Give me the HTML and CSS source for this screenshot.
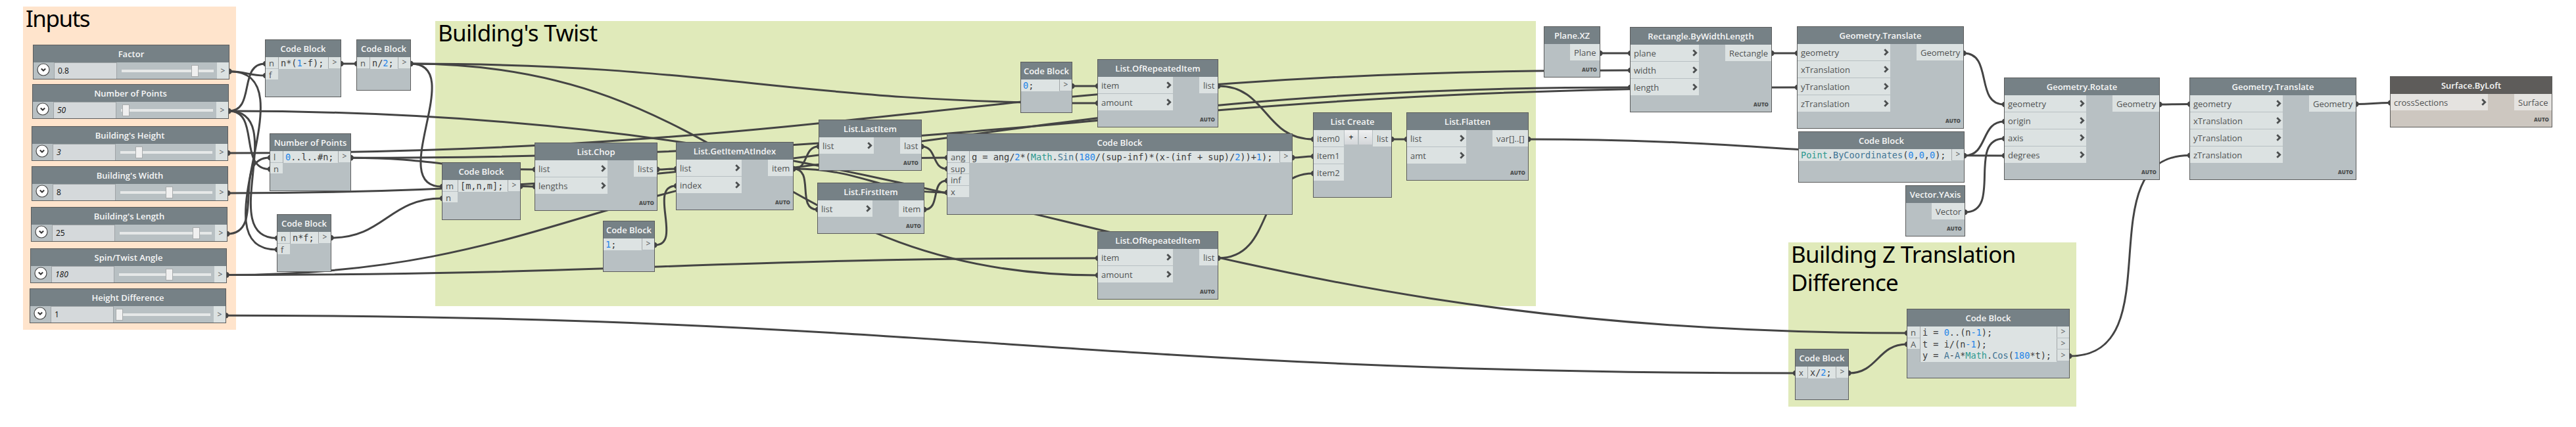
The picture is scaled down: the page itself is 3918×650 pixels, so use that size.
FILE: index.html
```html
<!DOCTYPE html>
<html lang="en">
<head>
<meta charset="utf-8">
<title>Graph workspace</title>
<link rel="stylesheet" href="styles.css">
</head>
<body>
<main class="canvas">
  <section class="group g-inputs"><h2>Inputs</h2></section>
  <section class="group green g-twist"><h2>Building's Twist</h2></section>
  <section class="group green g-diff"><h2>Building Z Translation Difference</h2></section>

  <svg class="wires" width="3918" height="650"></svg>

  <article class="node slider p-factor"><h3>Factor</h3><div class="body"><div class="toggle"><svg viewBox="0 0 20 20"><circle cx="10" cy="10" r="9"/><path d="M6.8 8.6 10 11.6 13.2 8.6"/></svg></div><div class="field">0.8</div><div class="range"><i></i></div><div class="out">&gt;</div></div></article>
  <article class="node slider p-points"><h3>Number of Points</h3><div class="body"><div class="toggle"><svg viewBox="0 0 20 20"><circle cx="10" cy="10" r="9"/><path d="M6.8 8.6 10 11.6 13.2 8.6"/></svg></div><div class="field"><em>50</em></div><div class="range"><i></i></div><div class="out">&gt;</div></div></article>
  <article class="node slider p-height"><h3>Building's Height</h3><div class="body"><div class="toggle"><svg viewBox="0 0 20 20"><circle cx="10" cy="10" r="9"/><path d="M6.8 8.6 10 11.6 13.2 8.6"/></svg></div><div class="field"><em>3</em></div><div class="range"><i></i></div><div class="out">&gt;</div></div></article>
  <article class="node slider p-width"><h3>Building's Width</h3><div class="body"><div class="toggle"><svg viewBox="0 0 20 20"><circle cx="10" cy="10" r="9"/><path d="M6.8 8.6 10 11.6 13.2 8.6"/></svg></div><div class="field">8</div><div class="range"><i></i></div><div class="out">&gt;</div></div></article>
  <article class="node slider p-length"><h3>Building's Length</h3><div class="body"><div class="toggle"><svg viewBox="0 0 20 20"><circle cx="10" cy="10" r="9"/><path d="M6.8 8.6 10 11.6 13.2 8.6"/></svg></div><div class="field">25</div><div class="range"><i></i></div><div class="out">&gt;</div></div></article>
  <article class="node slider p-spin"><h3>Spin/Twist Angle</h3><div class="body"><div class="toggle"><svg viewBox="0 0 20 20"><circle cx="10" cy="10" r="9"/><path d="M6.8 8.6 10 11.6 13.2 8.6"/></svg></div><div class="field"><em>180</em></div><div class="range"><i></i></div><div class="out">&gt;</div></div></article>
  <article class="node slider p-hdiff"><h3>Height Difference</h3><div class="body"><div class="toggle"><svg viewBox="0 0 20 20"><circle cx="10" cy="10" r="9"/><path d="M6.8 8.6 10 11.6 13.2 8.6"/></svg></div><div class="field">1</div><div class="range"><i></i></div><div class="out">&gt;</div></div></article>

  <article class="node code p-nf"><h3>Code Block</h3><div class="body"><ul class="ins"><li>n</li><li>f</li></ul><pre>n*(<b>1</b>-f);</pre><ul class="outs"><li>&gt;</li></ul></div></article>
  <article class="node code p-half"><h3>Code Block</h3><div class="body"><ul class="ins"><li>n</li></ul><pre>n/<b>2</b>;</pre><ul class="outs"><li>&gt;</li></ul></div></article>
  <article class="node code p-range"><h3>Number of Points</h3><div class="body"><ul class="ins"><li>l</li><li>n</li></ul><pre><b>0</b>..l..#n;</pre><ul class="outs"><li>&gt;</li></ul></div></article>
  <article class="node code p-mul"><h3>Code Block</h3><div class="body"><ul class="ins"><li>n</li><li>f</li></ul><pre>n*f;</pre><ul class="outs"><li>&gt;</li></ul></div></article>
  <article class="node code p-mnm"><h3>Code Block</h3><div class="body"><ul class="ins"><li>m</li><li>n</li></ul><pre>[m,n,m];</pre><ul class="outs"><li>&gt;</li></ul></div></article>

  <article class="node p-chop"><h3>List.Chop</h3><div class="body"><ul class="ins"><li>list</li><li>lengths</li></ul><ul class="outs"><li>lists</li></ul></div><footer>AUTO</footer></article>
  <article class="node p-getitem"><h3>List.GetItemAtIndex</h3><div class="body"><ul class="ins"><li>list</li><li>index</li></ul><ul class="outs"><li>item</li></ul></div><footer>AUTO</footer></article>
  <article class="node code p-one"><h3>Code Block</h3><div class="body"><pre><b>1</b>;</pre><ul class="outs"><li>&gt;</li></ul></div></article>
  <article class="node p-last"><h3>List.LastItem</h3><div class="body"><ul class="ins"><li>list</li></ul><ul class="outs"><li>last</li></ul></div><footer>AUTO</footer></article>
  <article class="node p-first"><h3>List.FirstItem</h3><div class="body"><ul class="ins"><li>list</li></ul><ul class="outs"><li>item</li></ul></div><footer>AUTO</footer></article>
  <article class="node code p-ang"><h3>Code Block</h3><div class="body"><ul class="ins"><li>ang</li><li>sup</li><li>inf</li><li>x</li></ul><pre>g = ang/<b>2</b>*(<u>Math</u>.<s>Sin</s>(<b>180</b>/(sup-inf)*(x-(inf + sup)/<b>2</b>))+<b>1</b>);</pre><ul class="outs"><li>&gt;</li></ul></div></article>
  <article class="node code p-zero"><h3>Code Block</h3><div class="body"><pre><b>0</b>;</pre><ul class="outs"><li>&gt;</li></ul></div></article>
  <article class="node p-rep1"><h3>List.OfRepeatedItem</h3><div class="body"><ul class="ins"><li>item</li><li>amount</li></ul><ul class="outs"><li>list</li></ul></div><footer>AUTO</footer></article>
  <article class="node p-rep2"><h3>List.OfRepeatedItem</h3><div class="body"><ul class="ins"><li>item</li><li>amount</li></ul><ul class="outs"><li>list</li></ul></div><footer>AUTO</footer></article>
  <article class="node p-create"><h3>List Create</h3><div class="body"><ul class="ins plain"><li>item0</li><li>item1</li><li>item2</li></ul><div class="buttons"><span>+</span><span>-</span></div><ul class="outs"><li>list</li></ul></div></article>
  <article class="node p-flatten"><h3>List.Flatten</h3><div class="body"><ul class="ins"><li>list</li><li>amt</li></ul><ul class="outs"><li>var[]..[]</li></ul></div><footer>AUTO</footer></article>

  <article class="node p-plane"><h3>Plane.XZ</h3><div class="body"><ul class="outs"><li>Plane</li></ul></div><footer>AUTO</footer></article>
  <article class="node p-rect"><h3>Rectangle.ByWidthLength</h3><div class="body"><ul class="ins"><li>plane</li><li>width</li><li>length</li></ul><ul class="outs"><li>Rectangle</li></ul></div><footer>AUTO</footer></article>
  <article class="node p-tr1"><h3>Geometry.Translate</h3><div class="body"><ul class="ins"><li>geometry</li><li>xTranslation</li><li>yTranslation</li><li>zTranslation</li></ul><ul class="outs"><li>Geometry</li></ul></div><footer>AUTO</footer></article>
  <article class="node code p-point"><h3>Code Block</h3><div class="body"><pre><u>Point</u>.<s>ByCoordinates</s>(<b>0</b>,<b>0</b>,<b>0</b>);</pre><ul class="outs"><li>&gt;</li></ul></div></article>
  <article class="node p-yaxis"><h3>Vector.YAxis</h3><div class="body"><ul class="outs"><li>Vector</li></ul></div><footer>AUTO</footer></article>
  <article class="node p-rotate"><h3>Geometry.Rotate</h3><div class="body"><ul class="ins"><li>geometry</li><li>origin</li><li>axis</li><li>degrees</li></ul><ul class="outs"><li>Geometry</li></ul></div><footer>AUTO</footer></article>
  <article class="node p-tr2"><h3>Geometry.Translate</h3><div class="body"><ul class="ins"><li>geometry</li><li>xTranslation</li><li>yTranslation</li><li>zTranslation</li></ul><ul class="outs"><li>Geometry</li></ul></div><footer>AUTO</footer></article>
  <article class="node warm p-loft"><h3>Surface.ByLoft</h3><div class="body"><ul class="ins"><li>crossSections</li></ul><ul class="outs"><li>Surface</li></ul></div><footer>AUTO</footer></article>
  <article class="node code p-x2"><h3>Code Block</h3><div class="body"><ul class="ins"><li>x</li></ul><pre>x/<b>2</b>;</pre><ul class="outs"><li>&gt;</li></ul></div></article>
  <article class="node code p-cos"><h3>Code Block</h3><div class="body"><ul class="ins"><li>n</li><li>A</li></ul><pre><span class="line">i = <b>0</b>..(n<b>-1</b>);</span><span class="line">t = i/(n<b>-1</b>);</span><span class="line">y = <s>A</s>-<s>A</s>*<u>Math</u>.<s>Cos</s>(<b>180</b>*t);</span></pre><ul class="outs"><li>&gt;</li><li>&gt;</li><li>&gt;</li></ul></div></article>
</main>
<script src="wires.js"></script>
</body>
</html>
```
FILE: styles.css
```css
* { box-sizing: border-box; }
body { margin: 0; background: #fff; font-family: "Open Sans", "Noto Sans", sans-serif; }
h2, h3, ul, pre { margin: 0; padding: 0; font-weight: 400; }
ul { list-style: none; }

.canvas { position: relative; width: 3918px; height: 650px; overflow: hidden; }

/* groups */
.group { position: absolute; display: flex; flex-direction: column; background: #ffe4cc; }
.group.green { background: #e0eaba; }
.group h2 { margin-top: -4px; padding-left: 4px; font-family: "Noto Sans", "Open Sans", sans-serif; font-size: 35px; line-height: 43px; letter-spacing: -0.7px; color: #000; }
.g-inputs { left: 35px; top: 10px; width: 324px; height: 492px; }
.g-inputs h2 { letter-spacing: -1.5px; }
.g-twist { left: 662px; top: 32px; width: 1674px; height: 434px; }
.g-diff { left: 2720px; top: 369px; width: 438px; height: 250px; }

/* connectors */
.wires { position: absolute; left: 0; top: 0; }
.wires path { fill: none; stroke: #444; stroke-width: 3; }
.wires circle { fill: #444; }

/* nodes */
.node { position: absolute; display: flex; flex-direction: column; border: 1px solid #5b5c5c; background: #b8c0c3; color: #505253; }
.node h3 { flex: none; height: 26px; background: #768186; color: #f6f7f7; font-size: 13px; font-weight: 600; line-height: 26px; text-align: center; white-space: nowrap; }
.body { display: flex; align-items: flex-start; }
.ins { flex: none; width: var(--in); }
.outs { flex: none; width: var(--out); margin-left: auto; }
.node li { display: flex; align-items: center; justify-content: space-between; height: 25px; padding: 1px 2px 0 5px; background: #dce2e2; font-size: 13px; line-height: 24px; white-space: nowrap; }
.node li + li { margin-top: 1px; }
.outs li { padding-left: 6px; }
.ins li::after { content: ""; width: 8px; height: 11px; margin-top: -1px; background: #4c4f50; clip-path: polygon(0.3px 2.2px, 2.3px 0.2px, 7.7px 5.5px, 2.3px 10.8px, 0.3px 8.8px, 3.6px 5.5px); }
.ins.plain li::after, .code .ins li::after { content: none; }
.node footer { margin-top: auto; height: 25px; padding-right: 4px; font-size: 8px; font-weight: 800; line-height: 27px; text-align: right; color: #4c4f50; }

/* code blocks */
.code li { height: 16.7px; padding-top: 1px; line-height: 16px; }
.code .outs { --out: 19px; }
.code .outs li { justify-content: center; padding: 0; font-size: 12px; border-left: 1px solid #a3a7a9; }
.code pre { flex: 1; min-height: 18px; padding: 1px 0 0 3px; border-left: 1px solid #a3a7a9; background: #dde3e3; color: #3a3a3a; font-family: "DejaVu Sans Mono", monospace; font-size: 13.57px; line-height: 17px; }
.code pre:first-child { border-left: 0; }
.line { display: block; height: 17.5px; }
pre b { font-weight: 400; color: #2485e8; }
pre u { text-decoration: none; color: #2e998f; }
pre s { text-decoration: none; color: #417595; }

/* sliders */
.slider { width: 299px; height: 53px; }
.slider .body { height: 25px; align-items: stretch; }
.toggle { flex: none; width: 31px; }
.toggle svg { display: block; width: 20px; height: 20px; margin: 1px 0 0 5px; }
.toggle circle { fill: #fff; stroke: #444; stroke-width: 1.2; }
.toggle path { fill: none; stroke: #333; stroke-width: 2; }
.field { flex: none; width: 96px; border: 1px solid #9fa4a7; border-bottom: 0; background: #d5d9db; padding-left: 5px; font-size: 12px; line-height: 24px; color: #0c0c0c; }
.range { flex: 1; display: flex; align-items: center; margin: 0 5px 0 7px; background: linear-gradient(#e6e8e8, #e6e8e8) 0 50% / 100% 4px no-repeat; }
.range i { width: 11px; height: 18px; margin-left: var(--v); border: 1px solid #a9acad; background: #f0f0f0; }
.slider .out { flex: none; width: 18px; background: #dce2e2; font-size: 12px; line-height: 25px; text-align: center; }

/* list-create buttons */
.buttons { display: flex; gap: 2px; margin-left: 1px; }
.buttons span { width: 20px; height: 22px; background: linear-gradient(#f0f1f2, #d3d6d9); color: #000; font-size: 12px; line-height: 22px; text-align: center; }

.warm { background: #cdc7c0; border-color: #5b5a58; }
.warm h3 { background: #5e5c5a; }
.warm li { background: #e5e3e0; }

/* node placement on the canvas */
.p-factor { left: 50px; top: 68px; --v: 106px; }
.p-points { left: 49px; top: 128px; --v: 2px; }
.p-height { left: 48px; top: 192px; --v: 23px; }
.p-width { left: 48px; top: 253px; --v: 69px; }
.p-length { left: 47px; top: 315px; --v: 111px; }
.p-spin { left: 46px; top: 378px; --v: 71px; }
.p-hdiff { left: 45px; top: 439px; --v: -4px; }
.p-nf { left: 403px; top: 60px; width: 116px; height: 88px; --in: 19px; }
.p-half { left: 542px; top: 60px; width: 83px; height: 78px; --in: 19px; }
.p-range { left: 410px; top: 203px; width: 124px; height: 88px; --in: 19px; }
.p-mul { left: 421px; top: 326px; width: 83px; height: 88px; --in: 19px; }
.p-mnm { left: 672px; top: 247px; width: 120px; height: 88px; --in: 23px; }
.p-chop { left: 813px; top: 217px; width: 187px; height: 104px; --in: 110px; --out: 35px; }
.p-getitem { left: 1028px; top: 216px; width: 179px; height: 104px; --in: 99px; --out: 38px; }
.p-one { left: 917px; top: 336px; width: 79px; height: 78px; }
.p-last { left: 1245px; top: 182px; width: 157px; height: 78px; --in: 83px; --out: 32px; }
.p-first { left: 1243px; top: 278px; width: 163px; height: 78px; --in: 83px; --out: 38px; }
.p-ang { left: 1440px; top: 203px; width: 526px; height: 124px; --in: 33px; }
.p-zero { left: 1552px; top: 94px; width: 79px; height: 78px; }
.p-rep1 { left: 1669px; top: 90px; width: 184px; height: 104px; --in: 114px; --out: 28px; }
.p-rep2 { left: 1669px; top: 352px; width: 184px; height: 104px; --in: 114px; --out: 28px; }
.p-create { left: 1997px; top: 171px; width: 120px; height: 130px; --in: 46px; --out: 28px; }
.p-flatten { left: 2139px; top: 171px; width: 186px; height: 104px; --in: 90px; --out: 54px; }
.p-plane { left: 2348px; top: 40px; width: 86px; height: 78px; --out: 45px; }
.p-rect { left: 2479px; top: 41px; width: 216px; height: 130px; --in: 104px; --out: 70px; }
.p-tr1 { left: 2733px; top: 40px; width: 254px; height: 156px; --in: 141px; --out: 71px; }
.p-point { left: 2735px; top: 200px; width: 253px; height: 78px; }
.p-yaxis { left: 2898px; top: 282px; width: 91px; height: 78px; --out: 50px; }
.p-rotate { left: 3048px; top: 118px; width: 237px; height: 156px; --in: 124px; --out: 71px; }
.p-tr2 { left: 3330px; top: 118px; width: 254px; height: 156px; --in: 141px; --out: 71px; }
.p-loft { left: 3635px; top: 116px; width: 247px; height: 78px; --in: 148px; --out: 57px; }
.p-x2 { left: 2730px; top: 531px; width: 82px; height: 78px; --in: 18px; }
.p-cos { left: 2900px; top: 470px; width: 248px; height: 106px; --in: 19px; }
```
FILE: wires.js
```js
// Each connector: output x, output y, input x, input y.
const wires = [
  [349, 108.7, 403, 115], [349, 108.7, 421, 380],
  [348, 169, 403, 97], [348, 169, 421, 362.5], [348, 169, 410, 257.5], [348, 169, 2900, 507],
  [347, 233, 2479, 107], [347, 294, 2479, 133], [346, 356, 410, 240],
  [345, 418.5, 1440, 240], [345, 418.5, 1669, 393],
  [344, 480.3, 2730, 568],
  [519, 97, 542, 97],
  [625, 97, 672, 284], [625, 97, 1669, 157], [625, 97, 1669, 419],
  [534, 240.3, 813, 258], [534, 240.3, 2733, 133],
  [504, 362, 672, 302], [792, 283.5, 813, 284],
  [1000, 258, 1028, 257], [996, 373, 1028, 283],
  [1207, 257, 1245, 223], [1207, 257, 1243, 319], [1207, 257, 1440, 293],
  [1402, 223, 1440, 257], [1406, 319, 1440, 275],
  [1631, 131, 1669, 131], [1853, 131, 1997, 212], [1853, 393, 1997, 264],
  [1966, 240, 1997, 238], [2117, 212, 2139, 212], [2325, 212, 3048, 237],
  [2434, 81, 2479, 81], [2695, 81, 2733, 81], [2987, 81, 3048, 159],
  [2988, 237, 3048, 185], [2989, 323, 3048, 211],
  [3285, 159, 3330, 158.5], [3584, 158.5, 3635, 156.5],
  [2812, 568, 2900, 524], [3148, 542, 3330, 236.5]
];

const svg = document.querySelector('.wires');
const add = (tag, attrs) => {
  const el = document.createElementNS('http://www.w3.org/2000/svg', tag);
  for (const k in attrs) el.setAttribute(k, attrs[k]);
  svg.appendChild(el);
};

// The horizontal handles are 45% of the distance between the two ports.
for (const [x0, y0, x1, y1] of wires) {
  const h = 0.45 * Math.hypot(x1 - x0, y1 - y0);
  add('path', { d: `M${x0} ${y0}C${x0 + h} ${y0} ${x1 - h} ${y1} ${x1} ${y1}` });
  add('circle', { cx: x0 - 0.5, cy: y0, r: 4.2 });
  add('circle', { cx: x1 + 1, cy: y1, r: 4.2 });
}
```
